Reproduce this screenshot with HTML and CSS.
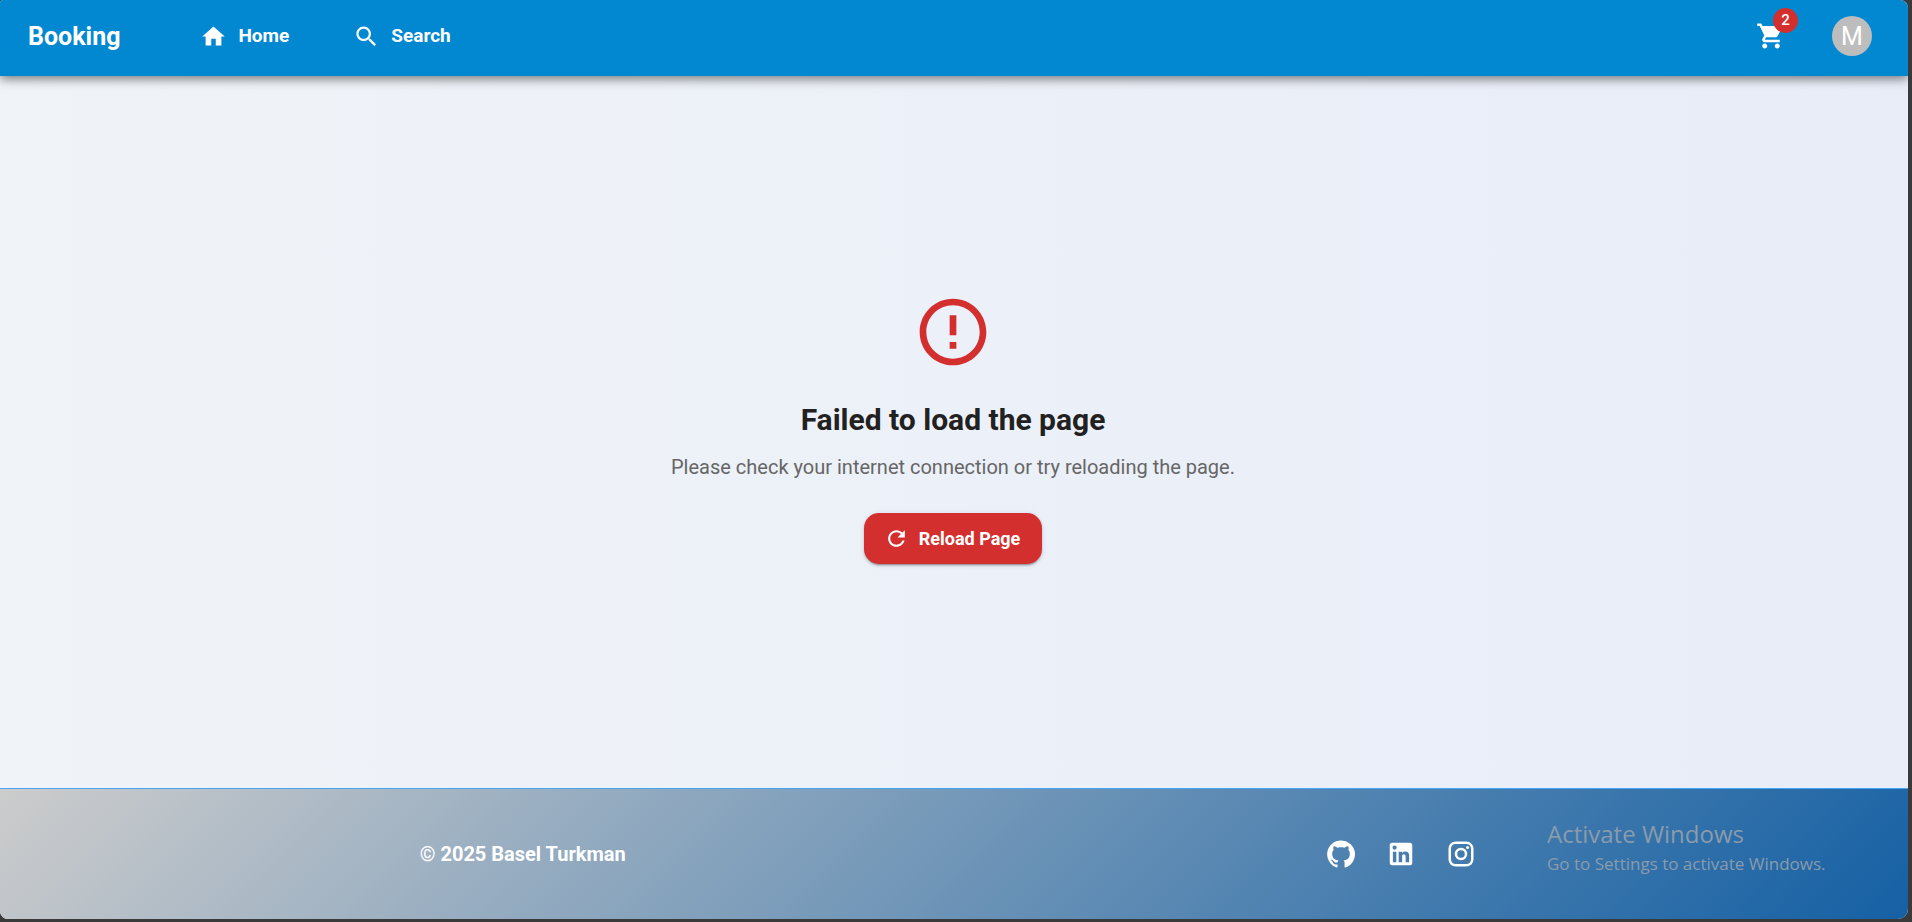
FILE: index.html
```html
<!DOCTYPE html>
<html lang="en">
<head>
<meta charset="utf-8">
<meta name="viewport" content="width=device-width, initial-scale=1">
<title>Booking</title>
<link rel="stylesheet" href="styles.css">
</head>
<body>
<div class="window">
  <header class="app-bar">
    <a class="brand" href="#">Booking</a>
    <nav class="nav">
      <a class="nav-link" href="#">
        <svg class="icon icon-nav" viewBox="0 0 24 24" aria-hidden="true"><path d="M10 20v-6h4v6h5v-8h3L12 3 2 12h3v8z"/></svg>
        <span class="nav-label">Home</span>
      </a>
      <a class="nav-link" href="#">
        <svg class="icon icon-nav" viewBox="0 0 24 24" aria-hidden="true"><path d="M15.5 14h-.79l-.28-.27C15.41 12.59 16 11.11 16 9.5 16 5.91 13.09 3 9.5 3S3 5.91 3 9.5 5.91 16 9.5 16c1.61 0 3.09-.59 4.23-1.57l.27.28v.79l5 4.99L20.49 19zm-6 0C7.01 14 5 11.99 5 9.5S7.01 5 9.5 5 14 7.01 14 9.5 11.99 14 9.5 14"/></svg>
        <span class="nav-label">Search</span>
      </a>
    </nav>
    <div class="actions">
      <button class="cart" type="button" aria-label="Cart">
        <svg class="icon icon-md" viewBox="0 0 24 24" aria-hidden="true"><path d="M7 18c-1.1 0-1.99.9-1.99 2S5.9 22 7 22s2-.9 2-2-.9-2-2-2M1 2v2h2l3.6 7.59-1.35 2.45c-.16.28-.25.61-.25.96 0 1.1.9 2 2 2h12v-2H7.42c-.14 0-.25-.11-.25-.25l.03-.12.9-1.63h7.45c.75 0 1.41-.41 1.75-1.03l3.58-6.49c.08-.14.12-.31.12-.48 0-.55-.45-1-1-1H5.21l-.94-2zm16 16c-1.1 0-1.99.9-1.99 2s.89 2 1.99 2 2-.9 2-2-.9-2-2-2"/></svg>
        <span class="badge">2</span>
      </button>
      <button class="avatar" type="button">M</button>
    </div>
  </header>

  <main class="content">
    <svg class="icon icon-error" viewBox="0 0 24 24" aria-hidden="true"><path d="M11 15h2v2h-2zm0-8h2v6h-2zm.99-5C6.47 2 2 6.48 2 12s4.47 10 9.99 10C17.52 22 22 17.52 22 12S17.52 2 11.99 2M12 20c-4.42 0-8-3.58-8-8s3.58-8 8-8 8 3.58 8 8-3.58 8-8 8"/></svg>
    <h1 class="title">Failed to load the page</h1>
    <p class="message">Please check your internet connection or try reloading the page.</p>
    <button class="reload" type="button">
      <svg class="icon icon-reload" viewBox="0 0 24 24" aria-hidden="true"><path d="M17.65 6.35C16.2 4.9 14.21 4 12 4c-4.42 0-7.99 3.58-7.99 8s3.57 8 7.99 8c3.73 0 6.84-2.55 7.73-6h-2.08c-.82 2.33-3.04 4-5.65 4-3.31 0-6-2.69-6-6s2.69-6 6-6c1.66 0 3.14.69 4.22 1.78L13 11h7V4z"/></svg>
      <span>Reload Page</span>
    </button>
  </main>

  <footer class="footer">
    <p class="copyright">© 2025 Basel Turkman</p>
    <div class="social">
      <a class="social-link" href="#" aria-label="GitHub"><svg class="icon icon-md" viewBox="0 0 24 24" aria-hidden="true"><path d="M12 1.27a11 11 0 00-3.48 21.46c.55.09.73-.28.73-.55v-1.84c-3.03.64-3.67-1.46-3.67-1.46-.55-1.29-1.28-1.65-1.28-1.65-.92-.65.1-.65.1-.65 1.1 0 1.73 1.1 1.73 1.1.92 1.65 2.57 1.2 3.21.92a2 2 0 01.64-1.47c-2.47-.27-5.04-1.19-5.04-5.5 0-1.1.46-2.1 1.2-2.84a3.76 3.76 0 010-2.93s.91-.28 3.11 1.1c1.8-.49 3.7-.49 5.5 0 2.1-1.38 3.02-1.1 3.02-1.1a3.76 3.76 0 01.1 2.93c.83.74 1.2 1.74 1.2 2.94 0 4.21-2.57 5.13-5.04 5.4.45.37.82.92.82 2.02v3.03c0 .27.1.64.73.55A11 11 0 0012 1.27"/></svg></a>
      <a class="social-link" href="#" aria-label="LinkedIn"><svg class="icon icon-md" viewBox="0 0 24 24" aria-hidden="true"><path d="M19 3a2 2 0 0 1 2 2v14a2 2 0 0 1-2 2H5a2 2 0 0 1-2-2V5a2 2 0 0 1 2-2h14m-.5 15.5v-5.3a3.26 3.26 0 0 0-3.26-3.26c-.85 0-1.84.52-2.32 1.3v-1.11h-2.79v8.37h2.79v-4.93c0-.77.62-1.4 1.39-1.4a1.4 1.4 0 0 1 1.4 1.4v4.93h2.79M6.88 8.56a1.68 1.68 0 0 0 1.68-1.68c0-.93-.75-1.69-1.68-1.69a1.69 1.69 0 0 0-1.69 1.69c0 .93.76 1.68 1.69 1.68m1.39 9.94v-8.37H5.5v8.37h2.77z"/></svg></a>
      <a class="social-link" href="#" aria-label="Instagram"><svg class="icon icon-md" viewBox="0 0 24 24" aria-hidden="true"><path d="M7.8 2h8.4C19.4 2 22 4.6 22 7.8v8.4a5.8 5.8 0 0 1-5.8 5.8H7.8C4.6 22 2 19.4 2 16.2V7.8A5.8 5.8 0 0 1 7.8 2m-.2 2A3.6 3.6 0 0 0 4 7.6v8.8C4 18.39 5.61 20 7.6 20h8.8a3.6 3.6 0 0 0 3.6-3.6V7.6C20 5.61 18.39 4 16.4 4H7.6m9.65 1.5a1.25 1.25 0 0 1 1.25 1.25A1.25 1.25 0 0 1 17.25 8 1.25 1.25 0 0 1 16 6.75a1.25 1.25 0 0 1 1.25-1.25M12 7a5 5 0 0 1 5 5 5 5 0 0 1-5 5 5 5 0 0 1-5-5 5 5 0 0 1 5-5m0 2a3 3 0 0 0-3 3 3 3 0 0 0 3 3 3 3 0 0 0 3-3 3 3 0 0 0-3-3z"/></svg></a>
    </div>
  </footer>
</div>
<aside class="activation">
  <p class="activation-title">Activate Windows</p>
  <p class="activation-text">Go to Settings to activate Windows.</p>
</aside>
</body>
</html>
```

FILE: styles.css
```css
* {
  box-sizing: border-box;
}

body {
  margin: 0;
  min-height: 100vh;
  display: flex;
  padding: 0 4px 3px 0;
  background: #3a3a3a;
  font-family: Roboto, "Liberation Sans", sans-serif;
}

h1,
p {
  margin: 0;
}

a {
  color: inherit;
  text-decoration: none;
}

button {
  border: 0;
  padding: 0;
  font-family: inherit;
  color: #fff;
  cursor: pointer;
}

.window {
  flex: 1;
  display: flex;
  flex-direction: column;
  overflow: hidden;
  border-radius: 3px 8px 10px 8px;
  background: linear-gradient(90deg, #f0f4f8, #ecf0f8 50%, #e8edf8);
}

.icon {
  display: block;
  flex: none;
  fill: currentColor;
}

.icon-nav {
  width: 27px;
  height: 27px;
}

.icon-md {
  width: 30px;
  height: 30px;
}

.icon-reload {
  width: 25px;
  height: 25px;
}

.icon-error {
  width: 80px;
  height: 80px;
  color: #d32f2f;
}

.app-bar {
  display: flex;
  align-items: center;
  height: 76px;
  padding: 0 36px 4px 28px;
  background: #0288d1;
  color: #fff;
  box-shadow: 0 3px 10px rgba(0, 0, 0, 0.5);
}

.brand {
  font-size: 25px;
  font-weight: 700;
}

.nav {
  display: flex;
  gap: 64px;
  margin-left: 80px;
}

.nav-link {
  display: flex;
  align-items: center;
  gap: 11px;
  font-size: 19px;
  font-weight: 700;
}

.nav-label {
  padding-bottom: 2px;
}

.actions {
  display: flex;
  align-items: center;
  gap: 46px;
  margin-left: auto;
}

.cart {
  position: relative;
  background: none;
}

.badge {
  position: absolute;
  top: -13px;
  right: -12px;
  width: 25px;
  height: 25px;
  border-radius: 50%;
  background: #d32f2f;
  font-size: 15px;
  font-weight: 500;
  line-height: 25px;
  text-align: center;
}

.avatar {
  width: 40px;
  height: 40px;
  border-radius: 50%;
  background: #bdbdbd;
  font-size: 25px;
}

.content {
  flex: 1;
  display: flex;
  flex-direction: column;
  align-items: center;
  justify-content: center;
  padding: 0 2px 8px 0;
}

.title {
  margin-top: 28px;
  font-size: 30px;
  line-height: 40px;
  font-weight: 700;
  color: #212121;
}

.message {
  margin-top: 12px;
  font-size: 20px;
  line-height: 30px;
  color: #666;
}

.reload {
  display: flex;
  align-items: center;
  gap: 10px;
  height: 51px;
  margin-top: 31px;
  padding: 0 22px 0 20px;
  border-radius: 15px;
  background: #d32f2f;
  font-size: 18px;
  font-weight: 700;
  box-shadow: 0 3px 1px -2px rgba(0, 0, 0, 0.2), 0 2px 2px 0 rgba(0, 0, 0, 0.14), 0 1px 5px 0 rgba(0, 0, 0, 0.12);
}

.footer {
  display: flex;
  align-items: center;
  justify-content: space-between;
  height: 131px;
  padding: 0 22%;
  border-top: 1px solid #42a5f5;
  background: linear-gradient(135deg, #ccc, #1560a4);
  color: #fff;
}

.copyright {
  font-size: 20px;
  font-weight: 700;
}

.social {
  display: flex;
  gap: 6px;
}

.social-link {
  padding: 12px;
}

.activation {
  position: absolute;
  right: 80px;
  bottom: 45px;
  width: 285px;
  font-family: "Open Sans", "Noto Sans", sans-serif;
  color: #8a9bab;
  white-space: nowrap;
  pointer-events: none;
}

.activation-title {
  font-size: 24px;
  line-height: 34px;
}

.activation-text {
  font-size: 17px;
  line-height: 26px;
}
```
